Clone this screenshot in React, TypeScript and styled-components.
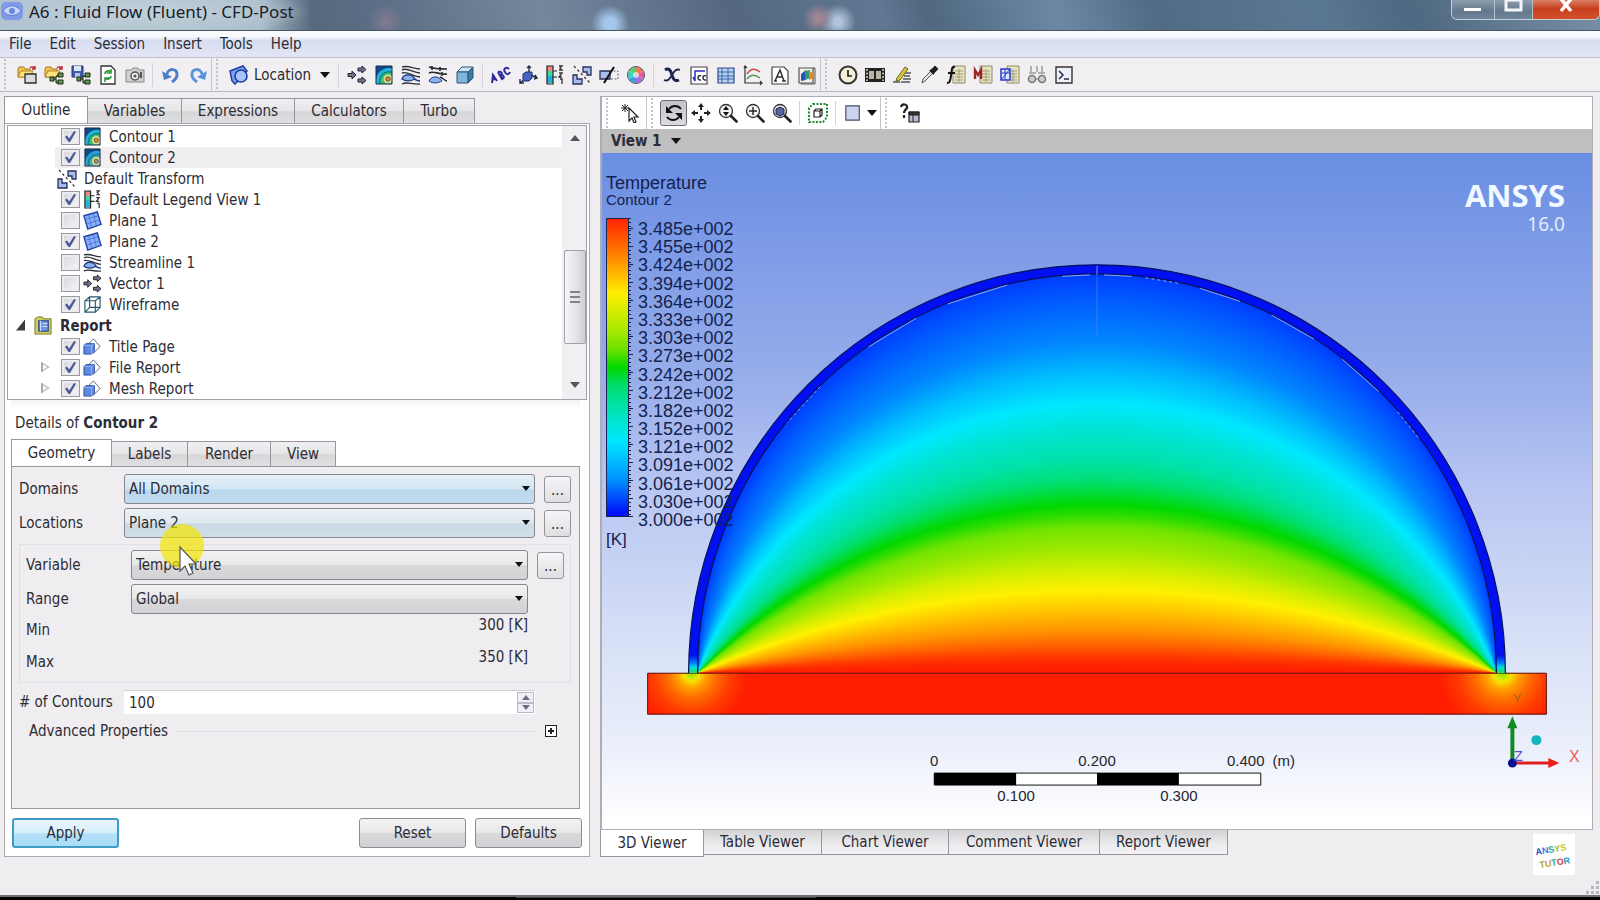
import React from "react";
import styled, { createGlobalStyle, css } from "styled-components";

const Global = createGlobalStyle`
  *, *::before, *::after { box-sizing: border-box; }
  body { margin: 0; background: #efedf0; }
  body, button, input, select {
    font-family: "DejaVu Sans Condensed", "DejaVu Sans", sans-serif;
    font-size: 15px;
    color: #2c2c34;
  }
  button, input, select { margin: 0; padding: 0; }
`;

const FACE_GREY = "linear-gradient(#f4f3f4 0%, #e9e8e9 48%, #d9d8da 52%, #d2d1d3 100%)";

/* ---------- icons, all on a 20 x 20 grid ---------- */

const folder = (
  <>
    <path d="M1 4l1-2h5l1 2h5v8H1z" fill="#f5c542" stroke="#a8792a" />
    <path d="M4 6h12l-3 6H1z" fill="#ffe27a" stroke="#b08530" />
    <path d="M13 3c2-2 4-1 5 1m0-3v3h-3" fill="none" stroke="#b3282c" strokeWidth="1.4" />
  </>
);
const tree = (
  <path d="M9 14h3v-3h3m-3 3v4h3M6 12h4v4H6zM14 8h5v4h-5zM14 15h5v4h-5z" fill="#5f9a4a" stroke="#1c2a1c" />
);
const sheet = <path d="M7 1h12v17H7z" fill="#e6e2c4" stroke="#8f8a68" />;
const sheetLines = <path d="M9 6h8M9 9h8M9 12h8M9 15h8M13 4v13" stroke="#a5a078" fill="none" />;
const lens = (
  <>
    <circle cx="8" cy="8" r="6.5" fill="#f4f4f6" stroke="#333" strokeWidth="1.3" />
    <path d="M13 13l5.500 5.500" stroke="#222" strokeWidth="2.600" strokeLinecap="round" />
  </>
);
const streams = (
  <>
    <path d="M1 2c7-2 11 2 18 2M1 5c6-3 11 3 18 3M1 8c5-2 12 4 18 4M1 19c5-3 10 1 18 0" fill="none" stroke="#30323c" strokeWidth="1.400" />
    <path d="M1 14c2-6 10-5 13 0-4 2-9 3-13 0z" fill="#8db0ee" stroke="#1c3a86" strokeWidth="1.300" />
    <path d="M13 14c2 1 4 2 6 2" fill="none" stroke="#1c3a86" strokeWidth="1.400" />
  </>
);
const arrowsRight = (
  <>
    <path d="M1 8.500h4V6l4 4-4 4v-2.500H1z" fill="#6b7390" stroke="#23242e" />
    <path d="M11 3h4V1l4 3.500L15 8V6h-4zM11 14h4v-2l4 3.500-4 3.500v-2h-4z" fill="#6b7390" stroke="#23242e" />
  </>
);
const contour = (inner: string, mid: string, near: string) => (
  <>
    <svg x="2" y="1" width="16" height="18">
      <path d="M0 0h16v18H0z" fill="#0d4a86" />
      <circle cx="13" cy="15" r="13" fill={mid} />
      <circle cx="13" cy="15" r="10" fill="#0c7f8e" />
      <circle cx="13" cy="15" r="8.500" fill={near} />
      <circle cx="12" cy="13" r="4.500" fill="#d9e09a" />
      <circle cx="12" cy="13" r="2.200" fill={inner} stroke="#6a4a30" />
    </svg>
    <path d="M2 1h16v18H2z" fill="none" stroke="#1a2a4a" />
  </>
);
const legendBar = (
  <>
    <path d="M2 1h6v6H2z" fill="#f08a80" />
    <path d="M2 6h6v6H2z" fill="#3fd89a" />
    <path d="M2 11h6v7H2z" fill="#23b3d6" />
    <path d="M2 1h6v18H2zM8 6h4M8 12h4" fill="none" stroke="#222" strokeWidth="1.200" />
    <path d="M14 1h3l-2 2 2 2h-3M14 8h3l-3 4h3M15 14h2v5" fill="none" stroke="#333" strokeWidth="1.300" />
  </>
);
const transform = (
  <>
    <path d="M11 2h8v8h-4V7h-4z" fill="#a9bdec" stroke="#23305c" strokeWidth="1.3" />
    <path d="M1 10h4v4h5v5H1z" fill="#a9bdec" stroke="#23305c" strokeWidth="1.3" />
    <path d="M2 1l16 17" stroke="#333" strokeWidth="1.3" strokeDasharray="2.500 2.500" />
  </>
);

const ICONS: Record<string, React.ReactNode> = {
  openCase: (<>{folder}<path d="M8 9h11v9H8z" fill="#dcdcdf" stroke="#2b2b2b" strokeWidth="1.300" /></>),
  openState: (<>{folder}{tree}</>),
  saveState: (
    <>
      <path d="M1 1h11v11H1z" fill="#3e5fae" stroke="#27386e" />
      <path d="M3 1h7v5H3z" fill="#dfe6f6" /><path d="M4 8h5v4H4z" fill="#b8c4e2" />
      {tree}
    </>
  ),
  refresh: (
    <>
      <path d="M3 1h10l4 4v14H3z" fill="#fff" stroke="#333" strokeWidth="1.300" />
      <path d="M7 9c0-3 4-4 6-2m0-3v4H9M13 11c0 3-4 4-6 2m0 4v-4h4" fill="none" stroke="#2f9a3a" strokeWidth="1.600" />
    </>
  ),
  camera: (
    <>
      <path d="M1 5h5l2-2h5l1 2h5v12H1z" fill="#cfcfcf" stroke="#888" />
      <circle cx="10" cy="11" r="4" fill="#eee" stroke="#555" strokeWidth="1.500" /><circle cx="10" cy="11" r="1.600" fill="#555" />
      <path d="M15 7h2v6h-2z" fill="#555" />
    </>
  ),
  undo: (
    <>
      <path d="M6 9c1-6 11-6 10 1 0 3-2 5-5 7" fill="none" stroke="#4f7ec8" strokeWidth="3" />
      <path d="M1 6l10 6-8 3z" fill="#4f7ec8" />
    </>
  ),
  redo: (
    <>
      <path d="M14 9C13 3 3 3 4 10c0 3 2 5 5 7" fill="none" stroke="#5a94dc" strokeWidth="3" />
      <path d="M19 6L9 12l8 3z" fill="#5a94dc" />
    </>
  ),
  location: (
    <>
      <path d="M1 6l13-5 4 5-12 13-3-3z" fill="#7fa2ef" stroke="#1d3d9c" strokeWidth="1.500" />
      <circle cx="12" cy="11" r="6" fill="#a9c3fa" stroke="#1d3d9c" strokeWidth="1.600" />
    </>
  ),
  vector: arrowsRight,
  contour: contour("#e88a2c", "#1fb6d8", "#3fbf6a"),
  contourDim: contour("#8a9a94", "#2c9fd8", "#4aa8a0"),
  stream: streams,
  particle: (
    <>
      <path d="M1 2c5 2 10 2 18 2M1 8c5-3 9 2 18 1M4 1v4M12 2v4M14 7v4" fill="none" stroke="#2a2a30" strokeWidth="1.600" />
      <path d="M1 16c3-6 10-5 13 0-4 2-9 3-13 0z" fill="#8db0ee" stroke="#1c3a86" />
      <path d="M12 12c3 1 5 4 7 4" fill="none" stroke="#2a2a30" strokeWidth="1.400" />
    </>
  ),
  cube: (
    <>
      <path d="M2 7l5-5h11l-5 5z" fill="#cfe6f6" stroke="#2c5674" />
      <path d="M2 7h11v11H2z" fill="#7fb6dc" stroke="#2c5674" />
      <path d="M13 7l5-5v11l-5 5z" fill="#3d7ba8" stroke="#2c5674" />
    </>
  ),
  abc: (
    <path d="M1 18l1-8 4 6M2 15l3-2M7 7l4 7c3-1 2-4-1-4 2-2 0-4-3-3M18 4c-3-3-6 0-4 3 1 3 4 3 5 0" fill="none" stroke="#2b2b9c" strokeWidth="2" />
  ),
  axes: (
    <>
      <path d="M11 1v8l8 4M11 11l-9 7M9 3l2-2 2 2M17 10l2 3-3 1M2 14v4h4" fill="none" stroke="#222a4a" strokeWidth="1.400" />
      <path d="M5 9l3-2h6v6l-3 3H5z" fill="#4464c0" stroke="#1b2c70" />
    </>
  ),
  legend: legendBar,
  transform,
  clip: (
    <>
      <path d="M1 6h10v8H1z" fill="#a9bdec" stroke="#23305c" strokeWidth="1.300" />
      <path d="M11 6h8v8h-8" fill="none" stroke="#666" strokeDasharray="2 1.500" />
      <path d="M5 18L15 2" stroke="#111" strokeWidth="2" />
    </>
  ),
  wheel: (
    <>
      <path d="M10 10V2a8 8 0 0 1 7 4z" fill="#f07a4a" /><path d="M10 10l7-4a8 8 0 0 1 0 8z" fill="#e85aa0" />
      <path d="M10 10l7 4a8 8 0 0 1-7 4z" fill="#a070e0" /><path d="M10 10v8a8 8 0 0 1-7-4z" fill="#3aa0e8" />
      <path d="M10 10l-7 4a8 8 0 0 1 0-8z" fill="#3ad8c0" /><path d="M10 10L3 6a8 8 0 0 1 7-4z" fill="#58d070" />
      <circle cx="10" cy="10" r="3" fill="#fff" opacity=".6" /><circle cx="10" cy="10" r="8.500" fill="none" stroke="#556" />
    </>
  ),
  variable: (
    <>
      <path d="M3 5c4-3 6 1 7 5s3 7 7 5" fill="none" stroke="#1b2550" strokeWidth="3" />
      <path d="M18 5c-4-2-6 2-8 5s-4 7-8 5" fill="none" stroke="#1b2550" strokeWidth="1.800" />
    </>
  ),
  expression: (
    <>
      <path d="M2 2h16v17H2z" fill="#fff" stroke="#444" strokeWidth="1.200" />
      <path d="M4 12l2 4V6h10" fill="none" stroke="#2b2bc0" strokeWidth="1.500" />
      <path d="M12 11c-4-2-4 5 0 4M17 11c-4-2-4 5 0 4" fill="none" stroke="#222" strokeWidth="1.400" />
    </>
  ),
  table: (
    <>
      <path d="M2 3h16v15H2z" fill="#b8d2f2" stroke="#2c4c84" strokeWidth="1.200" />
      <path d="M2 7h16M2 11h16M2 14h16M6 3v15M12 3v15" stroke="#3a64a8" />
    </>
  ),
  chart: (
    <>
      <path d="M2 1v17h17M4 3L2 1 1 3M17 16l2 2-2 2" fill="none" stroke="#333" strokeWidth="1.200" />
      <path d="M4 9c4-6 8-6 13-2" fill="none" stroke="#c84848" strokeWidth="1.500" />
      <path d="M4 14c4-5 8-5 13-1" fill="none" stroke="#48a058" strokeWidth="1.500" />
    </>
  ),
  textPage: (
    <>
      <path d="M2 2h12l4 4v13H2z" fill="#fff" stroke="#444" strokeWidth="1.200" />
      <path d="M5 16l5-11 4 11M7 12h6M4 16h3M12 16h4" fill="none" stroke="#333" strokeWidth="1.500" />
    </>
  ),
  figure: (
    <>
      <path d="M2 3h14v15H2z" fill="#f4f1e4" stroke="#555" strokeWidth="1.200" />
      <path d="M16 3h2v16H4v-1" fill="none" stroke="#555" />
      <path d="M4 9l5-4v10l-5 1z" fill="#2450c8" /><path d="M8 6l5-1v8l-5 2z" fill="#2e9a6c" /><path d="M12 6l4 2v5l-4 2z" fill="#e8862c" />
    </>
  ),
  clock: (
    <>
      <circle cx="10" cy="10" r="8.500" fill="#f4efd8" stroke="#333" strokeWidth="2" />
      <path d="M10 5v6h4" fill="none" stroke="#222" strokeWidth="1.700" />
    </>
  ),
  film: (
    <>
      <path d="M0 3h20v14H0z" fill="#222" />
      <path d="M4 6h5v8H4zM11 6h5v8h-5z" fill="#b8b6a2" />
      <path d="M2 4v12M18 4v12" stroke="#ddd" strokeWidth="1.500" strokeDasharray="2 1.500" />
    </>
  ),
  edit: (
    <>
      <path d="M1 17h7M12 8h7M12 11h6M11 14h8M9 17h9" stroke="#555" strokeWidth="1.300" />
      <path d="M5 13L13 2l3 2-8 11-4 1z" fill="#d8c83a" stroke="#6a6420" />
    </>
  ),
  dropper: (
    <>
      <path d="M3 18l1-4 8-8 2 2-8 8z" fill="#dfe6ea" stroke="#555" />
      <path d="M11 5l4 4M13 5l3-3 2 2-3 3z" fill="#222" stroke="#1a1a1a" strokeWidth="2" />
    </>
  ),
  fSheet: (<>{sheet}{sheetLines}<path d="M9 2C5 1 6 6 5 11s-1 7-4 7M2 8h7" fill="none" stroke="#111" strokeWidth="2" /></>),
  mSheet: (<>{sheet}{sheetLines}<path d="M2 14V5l3 5 3-5v9" fill="none" stroke="#9c2424" strokeWidth="2.400" /></>),
  wSheet: (<>{sheet}{sheetLines}<path d="M1 4h9v11H1z" fill="#dfe6ff" stroke="#2b3cc8" strokeWidth="1.500" /><path d="M1 8h9M5 4v11M1 15l9-11" stroke="#2b3cc8" /></>),
  compare: (
    <>
      <path d="M4 1v6M10 1v6M15 1v6M2 8h7M11 8h7" stroke="#999" strokeWidth="1.400" />
      <circle cx="5" cy="14" r="3.500" fill="#ccc" stroke="#777" strokeWidth="1.500" /><circle cx="15" cy="14" r="3.500" fill="#ccc" stroke="#777" strokeWidth="1.500" /><path d="M8 14h4" stroke="#777" />
    </>
  ),
  console: (
    <>
      <path d="M2 2h16v16H2z" fill="#eef0f8" stroke="#333" strokeWidth="1.400" />
      <path d="M5 6l4 4-4 4M10 14h5" fill="none" stroke="#222a50" strokeWidth="1.500" />
    </>
  ),
  pick: (
    <>
      <path d="M4 1v8M0 5h8M1 2l6 6M7 2L1 8" stroke="#222" />
      <path d="M8 5v13l3-3 2 5 2-1-2-5h4z" fill="#fff" stroke="#222" strokeWidth="1.200" />
    </>
  ),
  rotate: (
    <>
      <path d="M17 6C14 2 8 2 5 6M3 14c3 4 9 4 12 0" fill="none" stroke="#111" strokeWidth="2" />
      <path d="M2 3v7h7zM18 17v-7h-7z" fill="#111" />
    </>
  ),
  pan: <path d="M10 0l3 4h-2v3H9V4H7zM10 20l3-4h-2v-3H9v3H7zM0 10l4-3v2h3v2H4v2zM20 10l-4-3v2h-3v2h3v2z" fill="#222" />,
  zoom: (<>{lens}<path d="M8 3l3 4H5zM8 13l3-4H5z" fill="#111" /></>),
  zoomBox: (<>{lens}<path d="M8 4v8M4 8h8" stroke="#222" strokeWidth="1.400" /></>),
  zoomFit: (<>{lens}<path d="M4 6l4-2 4 2v5l-4 2-4-2z" fill="#5a64a0" stroke="#1b2250" /></>),
  fitAll: (
    <>
      <path d="M5 1h14v13l-4 5H1V5z" fill="none" stroke="#1f8a2c" strokeWidth="2" strokeDasharray="2 1.500" />
      <path d="M6 8h6v6H6zM6 8l2-2h6v6l-2 2M12 8l2-2" fill="#fff" stroke="#222" strokeWidth="1.200" />
    </>
  ),
  layout: <path d="M2 2h15v16H2z" fill="#ccd4f0" stroke="#4a4f66" strokeWidth="1.300" />,
  help: (
    <>
      <path d="M1 4c1-4 7-3 6 1-1 2-3 2-3 5M4 12v3" fill="none" stroke="#222" strokeWidth="2.200" />
      <path d="M9 9h10v10H9z" fill="#b6bcd8" stroke="#222" strokeWidth="1.200" /><path d="M9 9h10v3H9zM13 12v7" stroke="#222" fill="#333" />
    </>
  ),
  plane: (
    <>
      <path d="M1 5l14-4 4 13-14 5z" fill="#8cb0f8" stroke="#2044a8" strokeWidth="1.500" />
      <path d="M6 4l3 13M11 3l3 12M2 9l14-4M3 14l15-5" stroke="#4c76dc" />
    </>
  ),
  wireframe: <path d="M2 6h11v12H2zM7 2h11v11H7zM2 6l5-4M13 6l5-4M13 18l5-5M2 18l5-5" fill="none" stroke="#25586e" strokeWidth="1.200" />,
  report: (
    <>
      <path d="M1 3l3-2h5l1 2h8v16H1z" fill="#d2d05a" stroke="#77752a" />
      <path d="M5 5h10v11H5z" fill="#6a94e0" stroke="#25448c" strokeWidth="1.200" /><path d="M7 5v11M9 8h5M9 11h5" stroke="#dfe8ff" />
    </>
  ),
  page: (
    <>
      <path d="M11 2l7 8-7 7-7-8z" fill="#fff" stroke="#56607c" />
      <path d="M1 9l2-2h9v8l-3 3H1z" fill="#5f8ae0" stroke="#2a4ea0" />
      <path d="M1 9h8v9M9 9l3-2" fill="none" stroke="#8fb0f4" />
    </>
  ),
};

const IconSvg = styled.svg`
  display: block;
  flex: none;
`;
const Icon = ({ name, size = 20 }: { name: string; size?: number }) => (
  <IconSvg width={size} height={size} viewBox="0 0 20 20" aria-hidden="true">{ICONS[name]}</IconSvg>
);

const Caret = styled.span`
  flex: none;
  border: 5px solid transparent;
  border-top: 6px solid #111;
  border-bottom: 0;
`;

/* ---------- window frame ---------- */

const Window = styled.div`
  min-height: 100vh;
  display: flex;
  flex-direction: column;
  background: #efedf0;
`;

const TitleBar = styled.header`
  height: 31px;
  display: flex;
  align-items: flex-start;
  padding-left: 1px;
  border-bottom: 1px solid #4a5562;
  background:
    radial-gradient(ellipse 170px 26px at 140px 12px, #c3d3dcf0 0%, #b8c9d4d0 60%, transparent 100%),
    linear-gradient(90deg, #b0c2cf 0, #a9bcc9 260px, transparent 312px),
    radial-gradient(circle 19px at 610px 24px, #a3c6ec 0 30%, transparent 100%),
    radial-gradient(circle 15px at 818px 18px, #a08592 0 20%, transparent 100%),
    radial-gradient(circle 18px at 838px 22px, #b0c4dc 0 20%, transparent 100%),
    radial-gradient(circle 18px at 386px 22px, #807a90 0 10%, transparent 100%),
    linear-gradient(70deg, #57697f 0 20%, #5b6e85 24%, #73889d 34%, #536880 46%, #607892 55%, #4f6880 58%, #6c88a3 66%, #516b84 72%, #5b7892 82%, #4d6880 88%, #7890a5 100%);
`;
const AppMark = styled.svg`
  margin: 2px 5px 0 0;
`;
const Title = styled.h1`
  flex: 1;
  margin: 0;
  font: 400 17px/24px "Noto Sans", "Open Sans", sans-serif;
  color: #1a2028;
`;
const Captions = styled.div`
  display: flex;
  height: 20px;
  border: 1px solid #c3ced8;
  border-top: 0;
  border-radius: 0 0 6px 6px;
  overflow: hidden;
`;
const CaptionButton = styled.button<{ $w: number; $close?: boolean }>`
  width: ${(p) => p.$w}px;
  display: flex;
  justify-content: center;
  border: 0;
  border-right: 1px solid #b3c0cc;
  background: ${(p) =>
    p.$close ? "linear-gradient(#d98068, #c8401e 45%, #d2502c)" : "linear-gradient(#8c9dae, #63788d 60%, #70859a)"};
  &:last-child { border-right: 0; }
`;

const MenuBar = styled.nav`
  height: 27px;
  display: flex;
  border-bottom: 1px solid #c0c0c8;
  background: linear-gradient(#f8fafe 0 20%, #d8def0 36%, #e2e6f6 100%);
`;
const MenuItem = styled.button`
  padding: 0 9px;
  border: 0;
  background: none;
  line-height: 25px;
`;

const Bar = styled.div<{ $light?: boolean }>`
  display: flex;
  align-items: center;
  height: ${(p) => (p.$light ? 32 : 34)}px;
  border-bottom: ${(p) => (p.$light ? "0" : "1px solid #bcbac0")};
  background: ${(p) => (p.$light ? "#ffffff" : "#f1eff2")};
`;
const BarGroup = styled.div`
  display: flex;
  align-items: center;
  align-self: stretch;
  padding-left: 13px;
  border-right: 1px solid #c8c6cc;
  background: radial-gradient(circle at 1px 2px, #c4c2ca 1px, transparent 1px) 4px 4px / 4px 4px repeat-y;
  &:last-child { border-right: 0; }
`;
const ToolButton = styled.button<{ $pressed?: boolean }>`
  width: 27px;
  height: 26px;
  display: flex;
  align-items: center;
  justify-content: center;
  border: 1px solid transparent;
  border-radius: 3px;
  background: none;
  ${(p) =>
    p.$pressed &&
    css`
      border-color: #6c6c72;
      background: linear-gradient(#c4c4c8, #dcdce0);
    `}
`;
const WideTool = styled(ToolButton)<{ $w: number }>`
  width: ${(p) => p.$w}px;
  gap: 5px;
`;
const LocationText = styled.span`
  margin-right: 4px;
`;
const Divider = styled.span`
  width: 1px;
  height: 24px;
  margin: 0 4px;
  background: #d4d2d8;
`;

const Workspace = styled.main`
  flex: 1;
  display: grid;
  grid-template-columns: minmax(0, 586fr) minmax(0, 993fr);
  gap: 10px;
  padding: 4px 7px 0 4px;
`;

/* ---------- tabs ---------- */

const TabList = styled.div<{ $down?: boolean }>`
  display: flex;
  align-items: ${(p) => (p.$down ? "flex-start" : "flex-end")};
  height: 27px;
`;
const Tab = styled.button<{ $w: number; $on?: boolean; $down?: boolean }>`
  width: ${(p) => p.$w}px;
  height: ${(p) => (p.$on ? 27 : 25)}px;
  border: 1px solid #98969c;
  border-left-width: ${(p) => (p.$on ? 1 : 0)}px;
  ${(p) => (p.$down ? "border-top: 0;" : "border-bottom: 0;")}
  white-space: nowrap;
  background: ${(p) => (p.$on ? "#ffffff" : "linear-gradient(#f0eff1 0%, #e6e5e8 48%, #d6d5d8 54%, #e0dfe2 100%)")};
  ${(p) => p.$down && !p.$on && "background: linear-gradient(#d2d1d4, #ecebee 60%, #f2f1f4);"}
`;

/* ---------- outline tree ---------- */

const LeftPane = styled.section`
  display: flex;
  flex-direction: column;
`;
const Frame = styled.div`
  border: 1px solid #a9a7ae;
  padding: 1px 2px 8px;
  background: #ffffff;
`;
const TreeBox = styled.div`
  display: flex;
  border: 1px solid #a3a1a8;
  background: #ffffff;
`;
const TreeList = styled.ul`
  flex: 1;
  margin: 0;
  padding: 0;
  list-style: none;
`;
const TreeRow = styled.li<{ $selected?: boolean; $indent: number }>`
  height: 21px;
  display: flex;
  align-items: center;
  padding-left: ${(p) => p.$indent}px;
  background: ${(p) => (p.$selected ? "linear-gradient(90deg, #fff 47px, #f0eef1 47px)" : "none")};
`;
const Twisty = styled.span<{ $open?: boolean; $shown?: boolean }>`
  width: ${(p) => (p.$open ? 18 : 20)}px;
  height: 12px;
  flex: none;
  &::before {
    content: "";
    display: block;
    width: 9px;
    height: 11px;
    ${(p) => p.$shown && "background: linear-gradient(90deg, #aaa 2px, #c4c4c8 2px); clip-path: polygon(0 0, 100% 50%, 0 100%, 0 0, 2px 3px, 2px 8px, 6px 50%, 2px 3px);"}
    ${(p) => p.$open && "background: #3c3c40; clip-path: polygon(100% 0, 100% 100%, 0 100%);"}
  }
`;
const Check = styled.input`
  appearance: none;
  width: 19px;
  height: 17px;
  flex: none;
  margin-right: 3px;
  border: 1px solid #9a9aa2;
  box-shadow: inset 0 0 0 2px #ececf0;
  background: linear-gradient(135deg, #d4d4da, #f8f8fa);
  &:checked::before {
    content: "";
    display: block;
    width: 11px;
    height: 11px;
    margin: 2px 3px;
    background: #4a5a94;
    clip-path: polygon(0 52%, 18% 42%, 38% 68%, 82% 0, 100% 6%, 46% 100%, 32% 100%);
  }
`;
const RowLabel = styled.label<{ $bold?: boolean }>`
  display: flex;
  align-items: center;
  gap: 7px;
  font-weight: ${(p) => (p.$bold ? 700 : 400)};
  line-height: 20px;
`;
const ScrollTrack = styled.div`
  width: 24px;
  display: flex;
  flex-direction: column;
  align-items: center;
  padding: 9px 0 11px 2px;
  background: #f1eff2;
`;
const ScrollArrow = styled.span<{ $down?: boolean }>`
  border: 5px solid transparent;
  ${(p) => (p.$down ? "border-top: 6px solid #55555c; border-bottom: 0;" : "border-bottom: 6px solid #55555c; border-top: 0;")}
`;
const ScrollThumb = styled.div`
  width: 100%;
  height: 94px;
  margin: 109px 0 auto;
  display: flex;
  flex-direction: column;
  align-items: center;
  justify-content: center;
  gap: 3px;
  border: 1px solid #a2a0a8;
  border-radius: 2px;
  background: linear-gradient(90deg, #f6f5f7 0%, #e6e5e8 50%, #cfced3 100%);
`;
const GripLine = styled.span`
  width: 10px;
  height: 2px;
  background: #84828c;
`;

/* ---------- details form ---------- */

const Details = styled.form`
  position: relative;
  padding: 0 7px 0 4px;
`;
const DetailsTitle = styled.h2`
  margin: 0;
  padding: 7px 0 0 4px;
  font-size: 15px;
  font-weight: 400;
  line-height: 32px;
  background: linear-gradient(#f2f1f3, #fff 8px);
`;
const Page = styled.div`
  height: 343px;
  padding: 7px 8px 7px 7px;
  border: 1px solid #98969c;
  background: #efedf0;
`;
const FieldRow = styled.div`
  display: grid;
  grid-template-columns: 105px minmax(0, 1fr) 36px;
  align-items: center;
  margin-bottom: 4px;
`;
const FieldLabel = styled.label`
  white-space: nowrap;
`;
const SelectWrap = styled.span`
  position: relative;
  display: block;
`;
const SelectBox = styled.select<{ $tone: string }>`
  appearance: none;
  display: block;
  width: 100%;
  height: 30px;
  padding: 0 4px;
  border: 1px solid #86868c;
  border-radius: 3px;
  background: ${(p) => p.$tone};
`;
const SelectCaret = styled(Caret)`
  position: absolute;
  top: 12px;
  right: 5px;
  border-width: 5px 4px 0;
  pointer-events: none;
`;
const MoreButton = styled.button`
  justify-self: end;
  width: 27px;
  height: 27px;
  border: 1px solid #94949a;
  border-radius: 3px;
  background: linear-gradient(#f6f5f7, #dfdee1);
  line-height: 27px;
`;
const Group = styled.div`
  margin: 6px 0 7px;
  padding: 5px 6px 4px;
  border: 1px solid #e2e0e5;
`;
const ValueRow = styled.div`
  display: flex;
  justify-content: space-between;
  height: 32px;
  padding-right: 36px;
  line-height: 32px;
`;
const Values = styled.div`
  margin-top: -4px;
`;
const Value = styled.output`
  line-height: 22px;
`;
const Spin = styled.span`
  display: flex;
  height: 24px;
  padding: 1px;
  border-top: 1px solid #d0ced6;
  background: #ffffff;
`;
const SpinInput = styled.input`
  flex: 1;
  min-width: 0;
  padding: 0 4px;
  border: 0;
  background: none;
  appearance: textfield;
  &::-webkit-inner-spin-button { appearance: none; }
`;
const SpinButtons = styled.span`
  display: grid;
  width: 17px;
`;
const SpinButton = styled.button`
  display: grid;
  place-items: center;
  border: 1px solid #bcbac8;
  background: #f0eff5;
`;
const Advanced = styled.div`
  display: flex;
  align-items: center;
  gap: 9px;
  height: 22px;
  margin-top: 6px;
  padding: 0 14px 0 10px;
`;
const Rule = styled.span`
  flex: 1;
  border-top: 1px solid #e2e0e5;
`;
const Expander = styled.button`
  width: 12px;
  height: 12px;
  border: 1px solid #222;
  background:
    linear-gradient(#222, #222) center / 6px 2px no-repeat,
    linear-gradient(#222, #222) center / 2px 6px no-repeat,
    #fff;
`;
const Actions = styled.div`
  display: flex;
  gap: 9px;
  margin: 9px -2px 0 1px;
`;
const Action = styled.button<{ $primary?: boolean }>`
  width: 107px;
  height: 30px;
  border: 1px solid #8c8c92;
  border-radius: 3px;
  background: ${FACE_GREY};
  ${(p) =>
    p.$primary &&
    css`
      margin-right: auto;
      border: 2px solid #3f9bc8;
      background: linear-gradient(#eaf6fd 0%, #d6effc 48%, #b4e0f8 54%, #a8dcf6 100%);
    `}
`;
const Pointer = styled.svg`
  position: absolute;
  left: 152px;
  top: 123px;
  pointer-events: none;
`;

/* ---------- viewer ---------- */

const ViewerPane = styled.section`
  display: flex;
  flex-direction: column;
  min-width: 0;
`;
const ViewerFrame = styled.div`
  flex: 1;
  display: flex;
  flex-direction: column;
  border: 1px solid #aeacb4;
  border-left-width: 2px;
  background: #ffffff;
`;
const ViewTitle = styled.button`
  display: flex;
  align-items: center;
  gap: 9px;
  height: 24px;
  padding: 0 9px;
  border: 0;
  background: #bfbfbf;
  font-weight: 700;
`;
const Canvas = styled.div`
  position: relative;
  flex: 1;
  min-height: 500px;
  background: linear-gradient(#698ee3 0%, #7c9ae6 13%, #95acea 32%, #b8c6f2 50%, #ccd7f4 64%, #dde5f8 77%, #ebeffb 88%, #ffffff 99%);
`;
const Scene = styled.svg`
  position: absolute;
  inset: 0;
  width: 100%;
  height: 100%;
`;
const Legend = styled.div`
  position: absolute;
  left: 4px;
  top: 20px;
  color: #14224e;
  font-family: "Liberation Sans", Arial, sans-serif;
`;
const LegendTitle = styled.div`
  font-size: 18px;
  line-height: 20px;
`;
const LegendSub = styled.div`
  font-size: 15px;
  line-height: 14px;
`;
const LegendBody = styled.div`
  display: flex;
  margin-top: 11px;
`;
const LegendBar = styled.div`
  width: 23px;
  height: 299px;
  border: 1px solid #1a2450;
  background: linear-gradient(#ff2400 0%, #ff8000 12%, #ffee00 25%, #a4e800 38%, #6ce000 44%, #00d800 50%, #00dc6c 56%, #00e4c0 66%, #00e6ff 75%, #0090ff 88%, #0010f8 99%);
`;
const LegendTicks = styled.div`
  width: 4px;
  height: 299px;
  margin-right: 5px;
  background:
    repeating-linear-gradient(#1a2450 0 1px, transparent 1px 18px) 0 10px / 4px 100% no-repeat,
    repeating-linear-gradient(#1a2450 0 1px, transparent 1px 4px) 0 0 / 2px 100% no-repeat;
`;
const LegendLabels = styled.ol`
  display: flex;
  flex-direction: column;
  justify-content: space-between;
  height: 309px;
  margin: 2px 0 0;
  padding: 0;
  list-style: none;
  font-size: 18px;
  line-height: 18px;
`;
const LegendUnit = styled.div`
  font-size: 17px;
  line-height: 22px;
`;
const Brand = styled.div`
  position: absolute;
  top: 24px;
  right: 27px;
  color: #f2f8ff;
  text-align: right;
`;
const BrandName = styled.div`
  font: 700 31px/36px "Open Sans", sans-serif;
`;
const Release = styled.div`
  font: 400 19px/22px "Noto Sans", sans-serif;
  color: #e2ecfc;
`;

const StatusBar = styled.footer`
  position: relative;
  height: 38px;
`;
const TutorLogo = styled.svg`
  position: absolute;
  right: 25px;
  bottom: 20px;
`;
const SizeGrip = styled.svg`
  position: absolute;
  right: 0;
  bottom: 1px;
`;
const Taskbar = styled.div`
  height: 5px;
  border-top: 2px solid #6f7276;
  background: linear-gradient(90deg, #000 516px, #444 516px 816px, #000 816px) top / 100% 1px no-repeat, #000;
`;

/* ---------- temperature field ---------- */

const CX = 1097;
const BASE = 674;
const HALF = 400;

/* colour against height above the heated base, measured on the centre line */
const STOPS: [number, number, number, number][] = [
  [0, 255, 30, 0], [9, 255, 36, 0], [19, 255, 60, 0], [29, 255, 98, 0], [44, 255, 148, 0],
  [64, 255, 196, 0], [84, 255, 240, 0], [104, 212, 238, 0], [124, 162, 233, 0], [147, 114, 228, 0],
  [159, 50, 221, 0], [170, 0, 216, 0], [180, 0, 219, 50], [194, 0, 223, 116], [214, 0, 226, 168],
  [247, 0, 228, 214], [271, 0, 232, 255], [300, 0, 190, 255], [334, 0, 134, 255], [375, 0, 92, 255], [400, 0, 62, 255],
];

function colourAt(h: number) {
  let i = 1;
  while (i < STOPS.length - 1 && STOPS[i][0] < h) i++;
  const a = STOPS[i - 1];
  const b = STOPS[i];
  const k = Math.min(1, (h - a[0]) / (b[0] - a[0]));
  const mix = (n: 1 | 2 | 3) => Math.round(a[n] + (b[n] - a[n]) * k);
  return `rgb(${mix(1)},${mix(2)},${mix(3)})`;
}

/* isotherms are circular arcs that share both ends of the base */
const BANDS = Array.from({ length: 200 }, (_, i) => {
  const h = HALF - i * 2;
  const r = (HALF * HALF + h * h) / (2 * h);
  return { h, d: `M${CX - HALF} ${BASE}A${r.toFixed(2)} ${r.toFixed(2)} 0 0 1 ${CX + HALF} ${BASE}Z` };
});

const glint = (from: number, to: number) => {
  const p = (deg: number) => {
    const a = (deg * Math.PI) / 180;
    return `${(CX + 399 * Math.sin(a)).toFixed(1)} ${(BASE - 399 * Math.cos(a)).toFixed(1)}`;
  };
  return `M${p(from)}L${p(to)}`;
};

const spotStops = (
  <>
    <stop offset="0" stopColor="#8ce600" /><stop offset=".14" stopColor="#f4e400" />
    <stop offset=".26" stopColor="#ffa000" /><stop offset=".45" stopColor="#ff6a00" />
    <stop offset=".7" stopColor="#ff3c00" /><stop offset="1" stopColor="#ff1e00" />
  </>
);

const Simulation = () => (
  <Scene viewBox="602 153 990 677" preserveAspectRatio="xMidYMid meet" role="img" aria-label="Temperature contour of the dome">
    <defs>
      <radialGradient id="spotL" cx="691" cy="674" r="56" gradientUnits="userSpaceOnUse">{spotStops}</radialGradient>
      <radialGradient id="spotR" cx="1503" cy="674" r="62" gradientUnits="userSpaceOnUse">{spotStops}</radialGradient>
      <linearGradient id="wall" x1="0" y1="656" x2="0" y2="676" gradientUnits="userSpaceOnUse">
        <stop offset="0" stopColor="#0010f0" /><stop offset=".35" stopColor="#0070ff" />
        <stop offset=".6" stopColor="#00dce0" /><stop offset="1" stopColor="#40dc20" />
      </linearGradient>
    </defs>
    {BANDS.map((b) => <path key={b.h} d={b.d} fill={colourAt(b.h)} />)}
    <path d="M647 674h900v41H647z" fill="#ff1e00" />
    <path d="M647 674h120v41H647z" fill="url(#spotL)" />
    <path d="M1427 674h120v41h-120z" fill="url(#spotR)" />
    <path d="M647 674h900v41H647z" fill="none" stroke="#5a1010" />
    <path d="M688 674A409 409 0 0 1 1506 674H1497A400 400 0 0 0 697 674Z" fill="url(#wall)" />
    <path d="M688 674A409 409 0 0 1 1506 674M697 674A400 400 0 0 1 1497 674" fill="none" stroke="#06105c" strokeWidth="1.200" />
    <path d={[glint(-1, -5), glint(-13, -22), glint(-27, -35), glint(1, 5), glint(15, 21), glint(26, 33), glint(38, 45)].join("")} stroke="#a8c0f4" strokeOpacity=".8" fill="none" />
    <path d={[glint(-44, -51), glint(7, 12), glint(49, 54)].join("")} stroke="#a8c0f4" strokeOpacity=".8" strokeDasharray="3 3" fill="none" />
    <path d="M1097 266v9" stroke="#7f95e8" /><path d="M1097 276v60" stroke="#5c8cf0" strokeOpacity=".6" />

    <path d="M934 774h327v12H934z" fill="#fff" stroke="#111" />
    <path d="M934 774h82v12h-82zM1097 774h82v12h-82z" fill="#000" />
    <g fontFamily="Liberation Sans, Arial, sans-serif" fontSize="15" fill="#26262c" textAnchor="middle">
      <text x="934" y="767">0</text><text x="1097" y="767">0.200</text><text x="1246" y="767">0.400</text>
      <text x="1284" y="767">(m)</text><text x="1016" y="802">0.100</text><text x="1179" y="802">0.300</text>
    </g>

    <path d="M1513 764V728" stroke="#128a24" strokeWidth="4" /><path d="M1508 729l5-12 5 12z" fill="#128a24" />
    <path d="M1513 764h38" stroke="#e0201c" strokeWidth="3" /><path d="M1549 759l11 5-11 5z" fill="#e8201c" />
    <circle cx="1513" cy="764" r="4.500" fill="#0a1090" /><circle cx="1537" cy="741" r="5" fill="#14b4bc" />
    <g fontFamily="Liberation Sans, Arial, sans-serif" textAnchor="middle">
      <text x="1519" y="762" fontSize="15" fill="#4c50e0">Z</text>
      <text x="1575" y="763" fontSize="16" fill="#f05a5a">X</text>
      <text x="1518" y="704" fontSize="13" fill="#a86410">Y</text>
    </g>
  </Scene>
);

/* ---------- data ---------- */

const LEVELS = ["3.485", "3.455", "3.424", "3.394", "3.364", "3.333", "3.303", "3.273", "3.242", "3.212", "3.182", "3.152", "3.121", "3.091", "3.061", "3.030", "3.000"];

type Node = { label: string; icon: string; on?: boolean; selected?: boolean; branch?: boolean };
const OBJECTS: Node[] = [
  { label: "Default Legend View 1", icon: "legend", on: true },
  { label: "Plane 1", icon: "plane" },
  { label: "Plane 2", icon: "plane", on: true },
  { label: "Streamline 1", icon: "stream" },
  { label: "Vector 1", icon: "vector" },
  { label: "Wireframe", icon: "wireframe", on: true },
];
const PAGES: Node[] = [
  { label: "Title Page", icon: "page", on: true },
  { label: "File Report", icon: "page", on: true, branch: true },
  { label: "Mesh Report", icon: "page", on: true, branch: true },
];

const TreeItem = ({ node }: { node: Node }) => {
  const id = node.label.replace(/ /g, "-");
  return (
    <TreeRow $indent={33} $selected={node.selected}>
      <Twisty $shown={node.branch} />
      <Check type="checkbox" id={id} defaultChecked={node.on} />
      <RowLabel htmlFor={id}><Icon name={node.icon} size={19} />{node.label}</RowLabel>
    </TreeRow>
  );
};

const Tools = ({ names }: { names: string[] }) => (
  <>{names.map((n) => <ToolButton key={n} type="button" aria-label={n}><Icon name={n} /></ToolButton>)}</>
);

const BLUE = "linear-gradient(#e6f0f7 0%, #d4e6f3 48%, #bbd7ec 54%, #c2dcef 100%)";
const PALE = "linear-gradient(#ecf1f5 0%, #dfe9f0 48%, #cbdae5 54%, #d2dfe8 100%)";

const Choice = ({ id, label, value, tone, more }: { id: string; label: string; value: string; tone: string; more?: boolean }) => (
  <FieldRow>
    <FieldLabel htmlFor={id}>{label}</FieldLabel>
    <SelectWrap>
      <SelectBox id={id} $tone={tone}><option>{value}</option></SelectBox>
      <SelectCaret />
    </SelectWrap>
    {more && <MoreButton type="button" aria-label={`Browse ${label}`}>...</MoreButton>}
  </FieldRow>
);

const TUTOR: [string, string[]][] = [
  ["ANSYS", ["#2a4cc8", "#2f7fd0", "#28a0b0", "#9ac030", "#c8c820"]],
  ["TUTOR", ["#a0b020", "#c89a20", "#30a890", "#d03830", "#28a0c0"]],
];

export default function App() {
  return (
    <>
      <Global />
      <Window>
        <TitleBar>
          <AppMark width="23" height="19" viewBox="0 0 23 19" aria-hidden="true">
            <rect width="22" height="18" rx="5" fill="#7f9be8" />
            <path d="M2 9c5-7 13-7 18 0-5 6-13 6-18 0z" fill="#c8d6fa" stroke="#5a78d0" />
            <circle cx="11" cy="9" r="3" fill="#6a88e0" />
          </AppMark>
          <Title>A6 : Fluid Flow (Fluent) - CFD-Post</Title>
          <Captions>
            <CaptionButton $w={43} aria-label="Minimize"><svg width="20" height="19"><path d="M1 8h17v3H1z" fill="#fff" /></svg></CaptionButton>
            <CaptionButton $w={38} aria-label="Maximize"><svg width="20" height="19"><path d="M2 0h15v10H2z" fill="none" stroke="#f4f6fa" strokeWidth="3" /></svg></CaptionButton>
            <CaptionButton $w={66} $close aria-label="Close"><svg width="18" height="19"><path d="M4-1l10 12M14-1L4 11" stroke="#fff" strokeWidth="3.500" /></svg></CaptionButton>
          </Captions>
        </TitleBar>

        <MenuBar>
          {["File", "Edit", "Session", "Insert", "Tools", "Help"].map((m) => <MenuItem key={m} type="button">{m}</MenuItem>)}
        </MenuBar>

        <Bar role="toolbar">
          <BarGroup>
            <Tools names={["openCase", "openState", "saveState", "refresh", "camera"]} />
            <Divider />
            <Tools names={["undo", "redo"]} />
          </BarGroup>
          <BarGroup>
            <WideTool type="button" $w={109}><Icon name="location" /><LocationText>Location</LocationText><Caret /></WideTool>
            <Divider />
            <Tools names={["vector", "contour", "stream", "particle", "cube"]} />
            <Divider />
            <Tools names={["abc", "axes", "legend", "transform", "clip", "wheel"]} />
            <Divider />
            <Tools names={["variable", "expression", "table", "chart", "textPage", "figure"]} />
          </BarGroup>
          <BarGroup>
            <Tools names={["clock", "film", "edit", "dropper", "fSheet", "mSheet", "wSheet", "compare", "console"]} />
          </BarGroup>
        </Bar>

        <Workspace>
          <LeftPane>
            <TabList role="tablist">
              <Tab $w={84} $on>Outline</Tab>
              <Tab $w={94}>Variables</Tab>
              <Tab $w={113}>Expressions</Tab>
              <Tab $w={109}>Calculators</Tab>
              <Tab $w={71}>Turbo</Tab>
            </TabList>
            <Frame>
              <TreeBox>
                <TreeList>
                  <TreeItem node={{ label: "Contour 1", icon: "contour", on: true }} />
                  <TreeItem node={{ label: "Contour 2", icon: "contourDim", on: true, selected: true }} />
                  <TreeRow $indent={49}><RowLabel as="span"><Icon name="transform" />Default Transform</RowLabel></TreeRow>
                  {OBJECTS.map((n) => <TreeItem key={n.label} node={n} />)}
                  <TreeRow $indent={8}>
                    <Twisty $open />
                    <RowLabel as="span" $bold><Icon name="report" size={19} />Report</RowLabel>
                  </TreeRow>
                  {PAGES.map((n) => <TreeItem key={n.label} node={n} />)}
                </TreeList>
                <ScrollTrack>
                  <ScrollArrow />
                  <ScrollThumb><GripLine /><GripLine /><GripLine /></ScrollThumb>
                  <ScrollArrow $down />
                </ScrollTrack>
              </TreeBox>

              <Details onSubmit={(e) => e.preventDefault()}>
                <DetailsTitle>Details of <strong>Contour 2</strong></DetailsTitle>
                <TabList role="tablist">
                  <Tab type="button" $w={101} $on>Geometry</Tab>
                  <Tab type="button" $w={76}>Labels</Tab>
                  <Tab type="button" $w={83}>Render</Tab>
                  <Tab type="button" $w={65}>View</Tab>
                </TabList>
                <Page>
                  <Choice id="domains" label="Domains" value="All Domains" tone={BLUE} more />
                  <Choice id="locations" label="Locations" value="Plane 2" tone={PALE} more />
                  <Group>
                    <Choice id="variable" label="Variable" value="Temperature" tone={FACE_GREY} more />
                    <Choice id="range" label="Range" value="Global" tone={FACE_GREY} />
                    <Values>
                      <ValueRow><span>Min</span><Value>300 [K]</Value></ValueRow>
                      <ValueRow><span>Max</span><Value>350 [K]</Value></ValueRow>
                    </Values>
                  </Group>
                  <FieldRow>
                    <FieldLabel htmlFor="count"># of Contours</FieldLabel>
                    <Spin>
                      <SpinInput id="count" type="number" defaultValue={100} />
                      <SpinButtons>
                        <SpinButton type="button" aria-label="Increase"><svg width="8" height="5"><path d="M4 0l4 5H0z" fill="#6c6a88" /></svg></SpinButton>
                        <SpinButton type="button" aria-label="Decrease"><svg width="8" height="5"><path d="M4 5l4-5H0z" fill="#6c6a88" /></svg></SpinButton>
                      </SpinButtons>
                    </Spin>
                  </FieldRow>
                  <Advanced>
                    <span>Advanced Properties</span>
                    <Rule />
                    <Expander type="button" aria-label="Expand" />
                  </Advanced>
                </Page>
                <Actions>
                  <Action $primary type="submit">Apply</Action>
                  <Action type="reset">Reset</Action>
                  <Action type="button">Defaults</Action>
                </Actions>
                <Pointer width="46" height="56" viewBox="0 0 46 56" aria-hidden="true">
                  <circle cx="23" cy="23" r="22" fill="#f2e600" opacity=".7" />
                  <path d="M21 24v24l5-5 4 9 4-2-4-9h7z" fill="#fff" stroke="#555" strokeWidth="1.200" />
                </Pointer>
              </Details>
            </Frame>
          </LeftPane>

          <ViewerPane>
            <ViewerFrame>
              <Bar $light role="toolbar">
                <BarGroup>
                  <WideTool type="button" $w={31} aria-label="Select"><Icon name="pick" /></WideTool>
                </BarGroup>
                <BarGroup>
                  <ToolButton type="button" $pressed aria-label="Rotate"><Icon name="rotate" /></ToolButton>
                  <Tools names={["pan", "zoom", "zoomBox", "zoomFit"]} />
                  <Divider />
                  <Tools names={["fitAll"]} />
                  <Divider />
                  <WideTool type="button" $w={40} aria-label="Layout"><Icon name="layout" size={18} /><Caret /></WideTool>
                </BarGroup>
                <BarGroup>
                  <WideTool type="button" $w={31} aria-label="Help"><Icon name="help" /></WideTool>
                </BarGroup>
              </Bar>
              <ViewTitle type="button">View 1<Caret /></ViewTitle>
              <Canvas>
                <Simulation />
                <Legend>
                  <LegendTitle>Temperature</LegendTitle>
                  <LegendSub>Contour 2</LegendSub>
                  <LegendBody>
                    <LegendBar />
                    <LegendTicks />
                    <LegendLabels>{LEVELS.map((l) => <li key={l}>{l}e+002</li>)}</LegendLabels>
                  </LegendBody>
                  <LegendUnit>[K]</LegendUnit>
                </Legend>
                <Brand>
                  <BrandName>ANSYS</BrandName>
                  <Release>16.0</Release>
                </Brand>
              </Canvas>
            </ViewerFrame>
            <TabList role="tablist" $down>
              <Tab $w={104} $on $down>3D Viewer</Tab>
              <Tab $w={118} $down>Table Viewer</Tab>
              <Tab $w={127} $down>Chart Viewer</Tab>
              <Tab $w={151} $down>Comment Viewer</Tab>
              <Tab $w={128} $down>Report Viewer</Tab>
            </TabList>
          </ViewerPane>
        </Workspace>

        <StatusBar>
          <TutorLogo width="42" height="41" viewBox="0 0 42 41" role="img" aria-label="Ansys Tutor">
            <rect width="42" height="41" fill="#fff" />
            <g fontFamily="Liberation Sans, sans-serif" fontWeight="700" fontSize="9">
              {TUTOR.map(([word, colours], row) => (
                <text key={word} x={row ? 7 : 3} y={row ? 34 : 21} transform={`rotate(-9 ${row ? 7 : 3} ${row ? 34 : 21})`}>
                  {word.split("").map((c, i) => <tspan key={i} fill={colours[i]}>{c}</tspan>)}
                </text>
              ))}
            </g>
          </TutorLogo>
          <SizeGrip width="14" height="14" viewBox="0 0 14 14" aria-hidden="true">
            <path d="M10 1h3v3h-3zM10 6h3v3h-3zM10 11h3v3h-3zM5 6h3v3H5zM5 11h3v3H5zM0 11h3v3H0z" fill="#b8b6bc" />
          </SizeGrip>
        </StatusBar>
        <Taskbar />
      </Window>
    </>
  );
}
